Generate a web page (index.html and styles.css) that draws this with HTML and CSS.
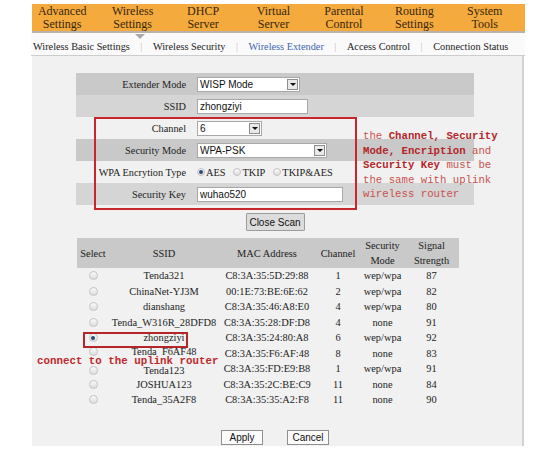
FILE: index.html
```html
<!DOCTYPE html>
<html lang="en">
<head>
<meta charset="utf-8">
<title>Wireless Extender</title>
<link rel="stylesheet" href="styles.css">
</head>
<body>
<div class="page">
  <nav class="topnav">
    <div class="tab">Advanced<br>Settings</div>
    <div class="tab active">Wireless<br>Settings</div>
    <div class="tab">DHCP<br>Server</div>
    <div class="tab">Virtual<br>Server</div>
    <div class="tab">Parental<br>Control</div>
    <div class="tab">Routing<br>Settings</div>
    <div class="tab">System<br>Tools</div>
  </nav>

  <div class="subnav">
    <span>Wireless Basic Settings</span><span class="sep">|</span>
    <span>Wireless Security</span><span class="sep">|</span>
    <span class="current">Wireless Extender</span><span class="sep">|</span>
    <span>Access Control</span><span class="sep">|</span>
    <span>Connection Status</span>
  </div>

  <div class="panel">
    <div class="form">
      <div class="row shade-dark">
        <div class="label">Extender Mode</div>
        <div class="value"><div class="select w-mode"><span>WISP Mode</span><i class="drop"></i></div></div>
      </div>
      <div class="row shade-light">
        <div class="label">SSID</div>
        <div class="value"><div class="input w-ssid">zhongziyi</div></div>
      </div>
      <div class="row">
        <div class="label">Channel</div>
        <div class="value"><div class="select w-channel"><span>6</span><i class="drop"></i></div></div>
      </div>
      <div class="row shade-dark">
        <div class="label">Security Mode</div>
        <div class="value"><div class="select w-security"><span>WPA-PSK</span><i class="drop"></i></div></div>
      </div>
      <div class="row">
        <div class="label">WPA Encrytion Type</div>
        <div class="value radios">
          <span class="radio on"></span><span class="opt">AES</span>
          <span class="radio"></span><span class="opt">TKIP</span>
          <span class="radio"></span><span class="opt">TKIP&amp;AES</span>
        </div>
      </div>
      <div class="row shade-light">
        <div class="label">Security Key</div>
        <div class="value"><div class="input w-key">wuhao520</div></div>
      </div>
    </div>

    <div class="scan-bar"><button class="btn-scan">Close Scan</button></div>

    <table class="scan">
      <colgroup>
        <col class="c-select"><col class="c-ssid"><col class="c-mac">
        <col class="c-channel"><col class="c-sec"><col class="c-signal">
      </colgroup>
      <thead>
        <tr><th>Select</th><th>SSID</th><th>MAC Address</th><th>Channel</th><th>Security<br>Mode</th><th>Signal<br>Strength</th></tr>
      </thead>
      <tbody>
        <tr><td><span class="dot"></span></td><td>Tenda321</td><td>C8:3A:35:5D:29:88</td><td>1</td><td>wep/wpa</td><td>87</td></tr>
        <tr><td><span class="dot"></span></td><td>ChinaNet-YJ3M</td><td>00:1E:73:BE:6E:62</td><td>2</td><td>wep/wpa</td><td>82</td></tr>
        <tr><td><span class="dot"></span></td><td>dianshang</td><td>C8:3A:35:46:A8:E0</td><td>4</td><td>wep/wpa</td><td>80</td></tr>
        <tr><td><span class="dot"></span></td><td>Tenda_W316R_28DFD8</td><td>C8:3A:35:28:DF:D8</td><td>4</td><td>none</td><td>91</td></tr>
        <tr><td><span class="dot on"></span></td><td>zhongziyi</td><td>C8:3A:35:24:80:A8</td><td>6</td><td>wep/wpa</td><td>92</td></tr>
        <tr class="raised"><td><span class="dot"></span></td><td>Tenda_F6AF48</td><td>C8:3A:35:F6:AF:48</td><td>8</td><td>none</td><td>83</td></tr>
        <tr class="lowered"><td><span class="dot"></span></td><td>Tenda123</td><td>C8:3A:35:FD:E9:B8</td><td>1</td><td>wep/wpa</td><td>91</td></tr>
        <tr><td><span class="dot"></span></td><td>JOSHUA123</td><td>C8:3A:35:2C:BE:C9</td><td>11</td><td>none</td><td>84</td></tr>
        <tr><td><span class="dot"></span></td><td>Tenda_35A2F8</td><td>C8:3A:35:35:A2:F8</td><td>11</td><td>none</td><td>90</td></tr>
      </tbody>
    </table>

    <div class="actions">
      <button class="btn">Apply</button>
      <button class="btn">Cancel</button>
    </div>

    <!-- hand-drawn callouts laid over the form -->
    <div class="callout-box"></div>
    <p class="note">the <b>Channel, Security</b><br><b>Mode, Encription</b> and<br><b>Security Key</b> must be<br>the same with uplink<br>wireless router</p>
    <div class="pick-box"></div>
    <p class="note-left">connect to the uplink router</p>
  </div>
</div>
</body>
</html>
```

FILE: styles.css
```css
* { box-sizing: border-box; }

body {
  margin: 0;
  background: #fff;
  color: #222;
  font-family: "Liberation Serif", "Times New Roman", serif;
}

.page {
  width: 493px;
  margin-left: 32px;
}

/* orange main menu */
.topnav {
  margin-top: 4px;
  height: 29px;
  display: grid;
  grid-template-columns: repeat(7, 1fr);
  background: #f5aa3e;
  border-bottom: 2px solid #b8b2aa;
}

.tab {
  position: relative;
  display: flex;
  align-items: center;
  justify-content: center;
  padding-right: 10px;
  text-align: center;
  font-size: 12px;
  line-height: 12.5px;
  color: #35270f;
}

.tab.active::after {
  content: "";
  position: absolute;
  left: calc(50% - 3px);
  bottom: -8px;
  border-left: 5px solid transparent;
  border-right: 5px solid transparent;
  border-top: 5px solid #a9a9a9;
}

/* secondary menu */
.subnav {
  height: 23px;
  padding: 5px 0 0 2px;
  margin-left: -1px;
  display: flex;
  align-items: center;
  font-size: 10.3px;
  line-height: 18px;
  color: #222;
  border-bottom: 1px solid #cdcdcd;
  background: #fafafa;
}

.subnav .sep {
  color: #bbb;
  margin: 0 10.5px;
}

.subnav .current { color: #4065b3; }

/* content panel */
.panel {
  position: relative;
  width: 492px;
  background: #f1f1f1;
  border-right: 2px solid #d2d2d2;
  padding: 17px 0 1px;
}

.form {
  margin-left: 44px;
  width: 398px;
}

.row {
  display: flex;
  align-items: center;
  height: 22px;
}

.shade-dark { background: #c9c9c9; }
.shade-light { background: #d5d5d5; }

.label {
  width: 114px;
  padding-right: 4px;
  text-align: right;
  font-size: 10.3px;
}

.value {
  padding-left: 7px;
  display: flex;
  align-items: center;
}

.select,
.input {
  display: flex;
  align-items: center;
  height: 15px;
  padding-left: 2px;
  border: 1px solid #a8a8a8;
  background: #fff;
  font: 10px/13px "Liberation Sans", Arial, sans-serif;
  color: #111;
}

.select span { flex: 1; }

.select .drop {
  display: flex;
  align-items: center;
  justify-content: center;
  width: 11px;
  height: 11px;
  margin-right: 1px;
  border: 1px solid #8d8d8d;
  background: #e9e9e9;
}

.select .drop::after {
  content: "";
  border-left: 3px solid transparent;
  border-right: 3px solid transparent;
  border-top: 3px solid #111;
}

.w-mode { width: 103px; }
.w-channel { width: 65px; }
.w-security { width: 130px; }
.w-ssid { width: 111px; }
.w-key { width: 146px; }

.radios { font-size: 10.3px; }

.radio {
  width: 8px;
  height: 8px;
  border-radius: 50%;
  border: 1px solid #c2c2c2;
  background: linear-gradient(#fafafa, #dedede);
  margin-right: 1px;
  display: inline-flex;
  align-items: center;
  justify-content: center;
}

.radio.on::after {
  content: "";
  width: 4px;
  height: 4px;
  border-radius: 50%;
  background: #2c4a78;
}

.opt { margin-right: 8px; }

.scan-bar {
  display: flex;
  justify-content: center;
  margin: 8px 0 0 44px;
  width: 398px;
}

.btn-scan {
  width: 59px;
  height: 18px;
  padding: 0;
  border: 1px solid #9c9c9c;
  border-radius: 1px;
  background: #dcdcdc;
  font: 10px "Liberation Sans", Arial, sans-serif;
  color: #111;
}

/* scan results */
.scan {
  margin: 7px 0 0 45px;
  width: 382px;
  table-layout: fixed;
  border-collapse: collapse;
  font-size: 10.4px;
  text-align: center;
}

.c-select { width: 32px; }
.c-ssid { width: 110px; }
.c-mac { width: 96px; }
.c-channel { width: 46px; }
.c-sec { width: 43px; }
.c-signal { width: 55px; }

.scan th {
  height: 30px;
  padding: 0;
  background: #c9c9c9;
  font-weight: normal;
  line-height: 15px;
}

.scan td {
  height: 15.5px;
  padding: 0;
  line-height: 15.5px;
  white-space: nowrap;
}

/* the two rows squeezed around the callout sit a little apart */
.scan tr.raised td:nth-child(-n+2) { vertical-align: top; line-height: 11px; }
.scan tr.lowered td:nth-child(-n+2) { vertical-align: bottom; line-height: 13px; }

.dot {
  display: inline-block;
  vertical-align: middle;
  width: 9px;
  height: 9px;
  margin-top: -2px;
  border-radius: 50%;
  border: 1px solid #c4c4c4;
  background: linear-gradient(#fbfbfb, #dcdcdc);
  position: relative;
}

.dot.on::after {
  content: "";
  position: absolute;
  left: 1.5px;
  top: 1.5px;
  width: 4px;
  height: 4px;
  border-radius: 50%;
  background: #2c4a78;
}

.actions {
  display: flex;
  justify-content: center;
  gap: 24px;
  margin: 22px 0 0 44px;
  width: 398px;
}

.btn {
  width: 42px;
  height: 15px;
  padding: 0;
  border: 1px solid #8e8e8e;
  background: #fbfbfb;
  font: 10px/13px "Liberation Sans", Arial, sans-serif;
  color: #111;
}

/* red callouts */
.callout-box {
  position: absolute;
  left: 62px;
  top: 61px;
  width: 263px;
  height: 93px;
  border: 2px solid #c6262c;
}

.note {
  position: absolute;
  left: 331px;
  top: 73px;
  width: 170px;
  margin: 0;
  font-family: "Liberation Mono", "Courier New", monospace;
  font-size: 10.7px;
  line-height: 14.5px;
  color: #c8524c;
}

.note b { color: #b3262a; }

.pick-box {
  position: absolute;
  left: 51px;
  top: 276px;
  width: 105px;
  height: 16px;
  border: 2px solid #b3262a;
}

.note-left {
  position: absolute;
  left: 5px;
  top: 300px;
  height: 10px;
  margin: 0;
  padding-right: 2px;
  background: #f1f1f1;
  font-family: "Liberation Mono", "Courier New", monospace;
  font-weight: bold;
  font-size: 10.8px;
  line-height: 10px;
  color: #c0282d;
}
```
